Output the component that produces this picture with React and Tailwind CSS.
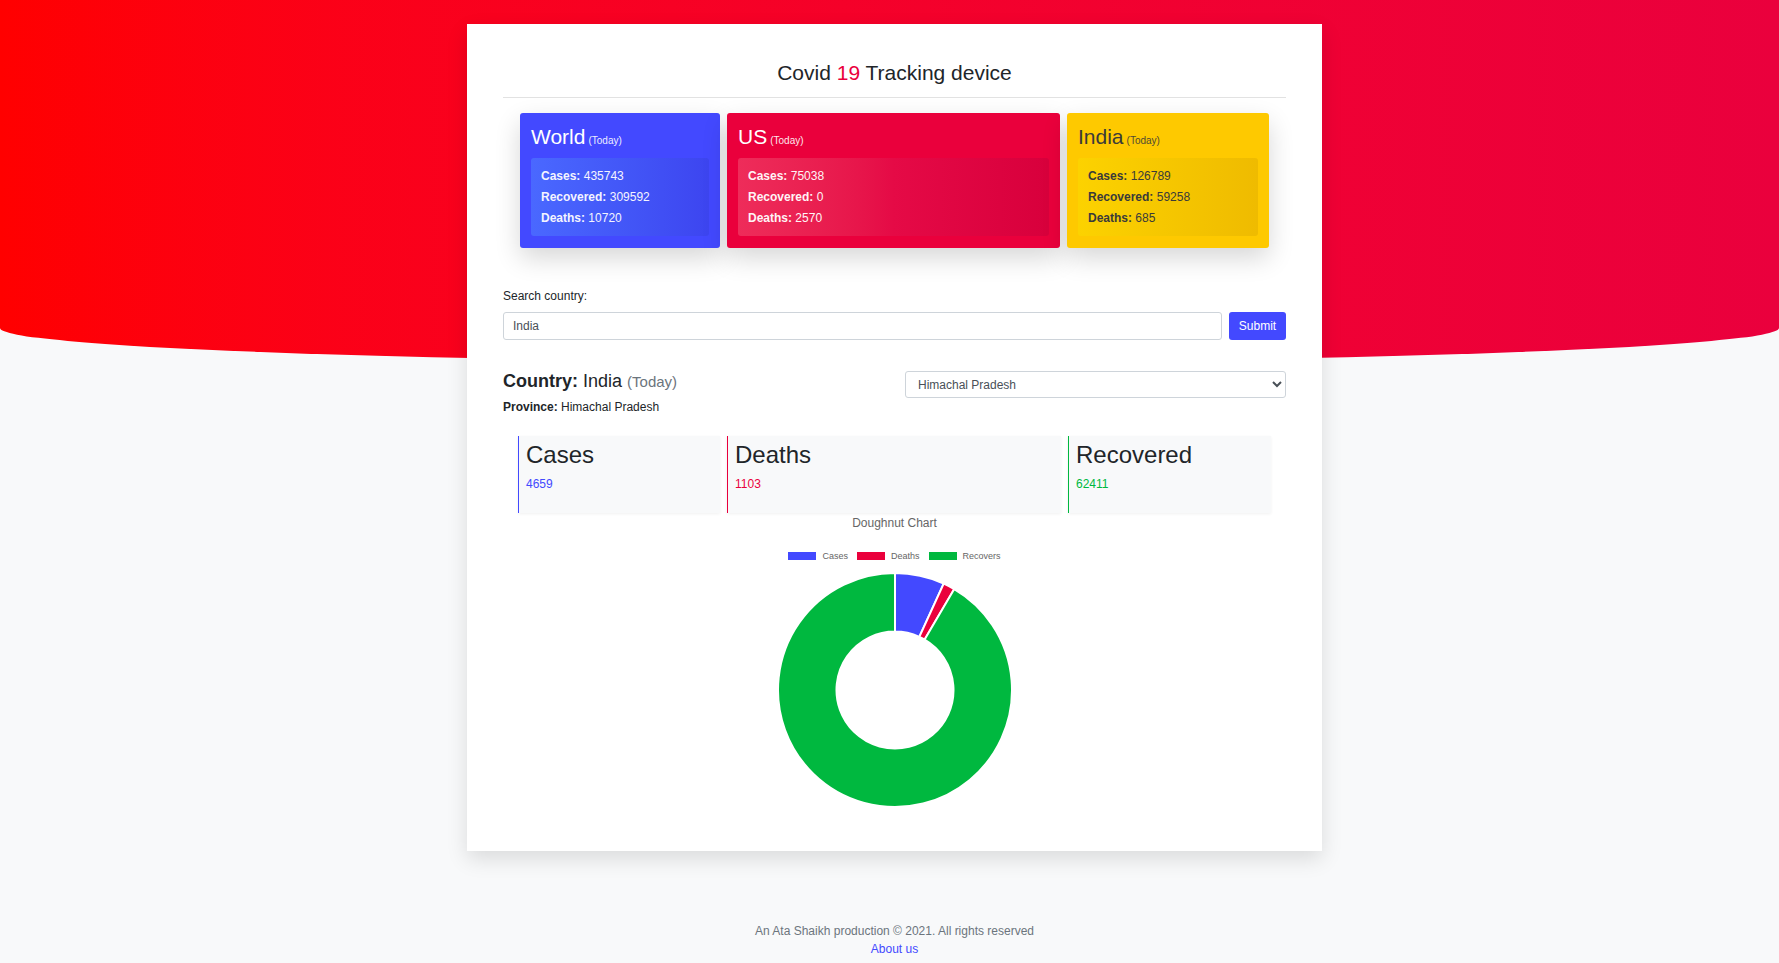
import { useState } from 'react';

const stats = {
  world: { cases: 435743, recovered: 309592, deaths: 10720 },
  us: { cases: 75038, recovered: 0, deaths: 2570 },
  india: { cases: 126789, recovered: 59258, deaths: 685 },
};

const province = { name: 'Himachal Pradesh', cases: 4659, deaths: 1103, recovered: 62411 };

const polar = (cx, cy, rad, deg) => {
  const a = ((deg - 90) * Math.PI) / 180;
  return [cx + rad * Math.cos(a), cy + rad * Math.sin(a)];
};

const arcPath = (cx, cy, R, r, start, end) => {
  const large = end - start > 180 ? 1 : 0;
  const [x1, y1] = polar(cx, cy, R, start);
  const [x2, y2] = polar(cx, cy, R, end);
  const [x3, y3] = polar(cx, cy, r, end);
  const [x4, y4] = polar(cx, cy, r, start);
  return `M${x1} ${y1} A${R} ${R} 0 ${large} 1 ${x2} ${y2} L${x3} ${y3} A${r} ${r} 0 ${large} 0 ${x4} ${y4} Z`;
};

const Doughnut = ({ data }) => {
  const total = data.reduce((s, d) => s + d.value, 0);
  let angle = 0;
  return (
    <svg width="238" height="238" viewBox="0 0 238 238" className="block mx-auto">
      {data.map((d) => {
        const start = angle;
        angle += (d.value / total) * 360;
        return (
          <path
            key={d.label}
            d={arcPath(119, 119, 117, 58.5, start, angle)}
            fill={d.color}
            stroke="#fff"
            strokeWidth="2"
          />
        );
      })}
    </svg>
  );
};

const SummaryCard = ({ name, data, className, innerClass, width }) => (
  <div className={`${width} rounded-[3px] px-[11px] pt-[11px] pb-[12px] shadow-[0_10px_26px_rgba(0,0,0,0.16)] ${className}`}>
    <div className="flex h-[25px] items-baseline gap-[3px] leading-[25px]">
      <span className="text-[21px]">{name}</span>
      <span className="text-[10px] leading-[12px] opacity-90">(Today)</span>
    </div>
    <div className={`mt-[9px] rounded-[3px] px-[10px] py-[7.5px] leading-[21px] ${innerClass}`}>
      <div><b>Cases:</b> {data.cases}</div>
      <div><b>Recovered:</b> {data.recovered}</div>
      <div><b>Deaths:</b> {data.deaths}</div>
    </div>
  </div>
);

const StatBox = ({ title, value, border, color, width }) => (
  <div className={`${width} h-[77px] bg-[#f8f9fa] border-l ${border} pl-[7px] pt-[5px] shadow-[0_1px_3px_rgba(0,0,0,0.06)]`}>
    <div className="text-[24px] leading-[28px] text-[#212529]">{title}</div>
    <div className={`mt-[6px] leading-[18px] ${color}`}>{value}</div>
  </div>
);

const App = () => {
  const [country, setCountry] = useState('India');
  const [prov, setProv] = useState(province.name);

  const chartData = [
    { label: 'Cases', value: province.cases, color: '#4349ff' },
    { label: 'Deaths', value: province.deaths, color: '#ea003c' },
    { label: 'Recovers', value: province.recovered, color: '#00b83f' },
  ];

  return (
    <div className="relative min-h-screen bg-[#f8f9fa] text-[12px] text-[#212529] font-['Liberation_Sans',Arial,sans-serif]">
      <div className="absolute inset-x-0 top-0 h-[362px] bg-gradient-to-r from-[#ff0000] to-[#ea003d] rounded-bl-[50%_34px] rounded-br-[50%_34px]" />

      <div className="relative pt-[24px] pl-[10px]">
        <main className="mx-auto w-[855px] bg-white px-[36px] pt-[36px] pb-[42px] shadow-[0_8px_20px_rgba(0,0,0,0.12)]">
          <h1 className="text-center text-[21px] leading-[25px]">
            Covid <span className="text-[#ea003c]">19</span> Tracking device
          </h1>
          <hr className="mt-[12px] border-t border-[#e2e2e2]" />

          <div className="mx-[17px] mt-[15px] flex gap-[7px]">
            <SummaryCard
              name="World"
              data={stats.world}
              width="w-[200px]"
              className="bg-[#4349ff] text-white"
              innerClass="bg-gradient-to-r from-[#4a68ff] to-[#3d45f0] text-[#f4f4ff]"
            />
            <SummaryCard
              name="US"
              data={stats.us}
              width="flex-1"
              className="bg-[#ea003c] text-white"
              innerClass="bg-gradient-to-r from-[#ee2c5a] via-[#e50a46] to-[#d8003c] text-[#fff4f6]"
            />
            <SummaryCard
              name="India"
              data={stats.india}
              width="w-[202px]"
              className="bg-[#fec900] text-[#3a3a3a]"
              innerClass="bg-gradient-to-r from-[#fcd200] to-[#efbb00]"
            />
          </div>

          <div className="mt-[39px] leading-[18px]">Search country:</div>
          <div className="mt-[7px] flex gap-[7px]">
            <input
              value={country}
              onChange={(e) => setCountry(e.target.value)}
              className="h-[28px] flex-1 rounded-[3px] border border-[#ced4da] px-[9px] text-[12px] text-[#495057] outline-none"
            />
            <button className="h-[28px] w-[57px] rounded-[3px] bg-[#4349ff] text-[12px] text-white">
              Submit
            </button>
          </div>

          <div className="mt-[31px] flex items-start justify-between">
            <div>
              <div className="text-[18px] leading-[22px] mt-[-1px]">
                <b>Country:</b> {country} <span className="text-[15px] text-[#6c757d]">(Today)</span>
              </div>
              <div className="mt-[5px] leading-[18px]">
                <b>Province:</b> {prov}
              </div>
            </div>
            <select
              value={prov}
              onChange={(e) => setProv(e.target.value)}
              className="h-[27px] w-[381px] rounded-[3px] border border-[#ced4da] bg-white px-[8px] text-[12px] text-[#495057]"
            >
              <option>Himachal Pradesh</option>
              <option>Maharashtra</option>
              <option>Delhi</option>
            </select>
          </div>

          <div className="mx-[15px] mt-[20px] flex gap-[7px]">
            <StatBox title="Cases" value={province.cases} width="w-[202px]" border="border-[#4349ff]" color="text-[#4349ff]" />
            <StatBox title="Deaths" value={province.deaths} width="flex-1" border="border-[#ea003c]" color="text-[#ea003c]" />
            <StatBox title="Recovered" value={province.recovered} width="w-[203px]" border="border-[#00b83f]" color="text-[#00b83f]" />
          </div>

          <div className="mt-[1px] text-center leading-[18px] text-[#666]">Doughnut Chart</div>
          <div className="mt-[18px] flex justify-center gap-[9px] text-[9px] leading-[12px] text-[#666]">
            {chartData.map((d) => (
              <div key={d.label} className="flex items-center gap-[6px]">
                <span className="inline-block h-[8px] w-[28px]" style={{ background: d.color }} />
                <span>{d.label}</span>
              </div>
            ))}
          </div>
          <div className="mt-[9px]">
            <Doughnut data={chartData} />
          </div>
        </main>

        <footer className="mt-[71px] pb-[7px] text-center leading-[18px]">
          <div className="text-[#6c757d]">An Ata Shaikh production © 2021. All rights reserved</div>
          <a href="#" className="text-[#4349ff]">About us</a>
        </footer>
      </div>
    </div>
  );
};

export default App;
